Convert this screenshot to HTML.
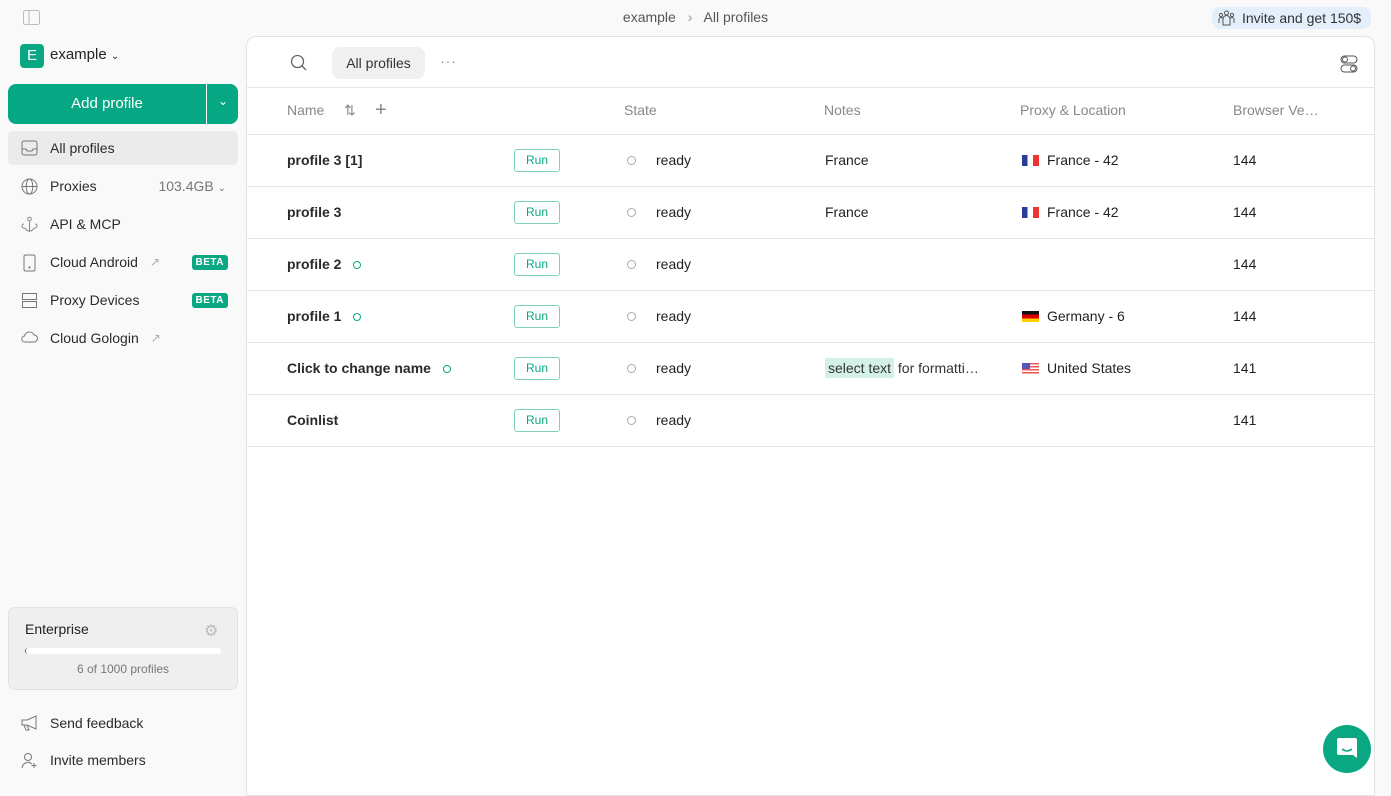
<!DOCTYPE html>
<html><head><meta charset="utf-8"><style>
*{box-sizing:border-box;margin:0;padding:0}
body{width:1391px;height:793px;background:#f9f9f9;font-family:"Liberation Sans",sans-serif;font-size:14px;color:#222;position:relative;overflow:hidden}
.abs{position:absolute}
.nav{position:absolute;left:8px;width:230px;height:34px;display:flex;align-items:center;padding-left:42px;font-size:14px;color:#2b2b2b}
.nav svg{position:absolute;left:13px;top:9px}
.beta{position:absolute;right:10px;top:10px;background:#0aa882;color:#fff;font-size:10px;font-weight:bold;padding:2px 4px;border-radius:3px;letter-spacing:.5px}
.ext{color:#aaa;font-size:12px;margin-left:12px}
.main{position:absolute;left:246px;top:36px;width:1129px;height:760px;background:#fff;border:1px solid #e3e3e3;border-radius:10px 10px 0 0}
.row{position:absolute;left:0;width:1128px;height:52px;border-bottom:1px solid #e6e6e6}
.row>*{position:absolute;top:0;line-height:50px}
.nm{left:40px;font-weight:bold;color:#2a2a2a}
.run{left:267px;top:14px!important;width:46px;height:23px;line-height:21px!important;border:1px solid #7fd0bd;border-radius:3px;color:#0aa882;font-size:12px;text-align:center}
.st{left:380px;top:21px!important;width:9px;height:9px;border:1px solid #aaa;border-radius:50%}
.rd{left:409px}
.nt{left:578px}
.px{left:800px}
.bv{left:986px}
.flag{display:inline-block;width:17px;height:11px;vertical-align:-1px;margin-right:8px;position:relative;left:-25px;margin-right:-17px}
.gd{display:inline-block;width:8px;height:8px;border:1.5px solid #0aa882;border-radius:50%;margin-left:12px;vertical-align:0}
.hd{position:absolute;top:0;line-height:45px;color:#888}
</style></head><body>
<svg class="abs" style="left:23px;top:10px" width="17" height="15" viewBox="0 0 17 15"><rect x=".5" y=".5" width="16" height="14" rx="2" fill="none" stroke="#bbb"/><line x1="6" y1="1" x2="6" y2="14" stroke="#bbb"/></svg>
<div class="abs" style="left:0;width:1391px;top:9px;text-align:center;color:#555;font-size:14px">example <span style="color:#999;margin:0 8px">›</span> All profiles</div>
<div class="abs" style="left:1212px;top:7px;width:159px;height:22px;background:#e3effb;border-radius:8px;font-size:14px;line-height:22px;padding-left:30px;color:#333">Invite and get 150$</div>
<svg class="abs" style="left:1218px;top:10px" width="17" height="16" viewBox="0 0 17 16" fill="none" stroke="#555"><circle cx="8.5" cy="3" r="2"/><circle cx="3" cy="5" r="1.6"/><circle cx="14" cy="5" r="1.6"/><path d="M5 15V9a3.5 3.5 0 017 0v6zM1 13V9.5a2 2 0 014 0M16 13V9.5a2 2 0 00-4 0"/></svg>

<div class="abs" style="left:20px;top:44px;width:24px;height:24px;background:#0aa882;border-radius:4px;color:#fff;text-align:center;line-height:24px;font-size:15px">E</div>
<div class="abs" style="left:50px;top:46px;font-size:15px;color:#222">example <span style="font-size:10px">⌄</span></div>
<div class="abs" style="left:8px;top:84px;width:230px;height:40px;background:#05a882;border-radius:8px"></div>
<div class="abs" style="left:8px;top:84px;width:198px;height:40px;line-height:40px;text-align:center;color:#fff;font-size:15px">Add profile</div>
<div class="abs" style="left:206px;top:84px;width:1px;height:40px;background:#fff"></div>
<div class="abs" style="left:218px;top:94px;color:#fff;font-size:12px">⌄</div>

<div class="nav" style="top:131px;background:#ebebeb;border-radius:5px"><svg width="17" height="16" viewBox="0 0 17 16" fill="none" stroke="#777"><rect x="1" y="1" width="15" height="14" rx="2"/><path d="M1 9h4l1 2h5l1-2h4"/></svg>All profiles</div>
<div class="nav" style="top:169px"><svg width="17" height="17" viewBox="0 0 17 17" fill="none" stroke="#777"><circle cx="8.5" cy="8.5" r="7.5"/><ellipse cx="8.5" cy="8.5" rx="3.3" ry="7.5"/><path d="M1 8.5h15"/></svg>Proxies<span style="position:absolute;right:12px;color:#777">103.4GB <span style="font-size:10px">⌄</span></span></div>
<div class="nav" style="top:207px"><svg width="17" height="17" viewBox="0 0 17 17" fill="none" stroke="#888"><circle cx="8.5" cy="3" r="1.8"/><path d="M8.5 5v11M3 8a2 2 0 100 4c2 0 2 3 5 3M14 8a2 2 0 110 4c-2 0-2 3-5 3"/></svg>API &amp; MCP</div>
<div class="nav" style="top:245px"><svg width="17" height="18" viewBox="0 0 17 18" fill="none" stroke="#777"><rect x="3" y="1" width="11" height="16" rx="1.5"/><circle cx="8.5" cy="13.5" r=".6" fill="#666"/></svg>Cloud Android<span class="ext">↗</span><span class="beta">BETA</span></div>
<div class="nav" style="top:283px"><svg width="17" height="17" viewBox="0 0 17 17" fill="none" stroke="#777"><rect x="1.5" y="1.5" width="14" height="6"/><rect x="1.5" y="9.5" width="14" height="6"/></svg>Proxy Devices<span class="beta">BETA</span></div>
<div class="nav" style="top:321px"><svg width="17" height="14" viewBox="0 0 17 14" fill="none" stroke="#777"><path d="M4 12a3 3 0 01-.5-6A5 5 0 0113 5a3.5 3.5 0 010 7z"/></svg>Cloud Gologin<span class="ext">↗</span></div>

<div class="abs" style="left:8px;top:607px;width:230px;height:83px;background:#efefef;border:1px solid #e2e2e2;border-radius:7px"></div>
<div class="abs" style="left:25px;top:621px;color:#222">Enterprise</div>
<div class="abs" style="left:204px;top:621px;color:#bbb;font-size:16px">⚙</div>
<div class="abs" style="left:25px;top:648px;width:196px;height:6px;background:#fff;border-radius:3px;border-left:1px solid #666"></div>
<div class="abs" style="left:8px;width:230px;top:662px;text-align:center;color:#777;font-size:12px">6 of 1000 profiles</div>
<div class="nav" style="top:706px"><svg width="17" height="16" viewBox="0 0 17 16" fill="none" stroke="#777"><path d="M1 5h5l9-4v13l-9-4H1zM3 10l2 5h3l-2-5"/></svg>Send feedback</div>
<div class="nav" style="top:743px"><svg width="17" height="17" viewBox="0 0 17 17" fill="none" stroke="#777"><circle cx="7" cy="5" r="3.5"/><path d="M1 16a6 6 0 0110-4M13 11v5M10.5 13.5h5"/></svg>Invite members</div>

<div class="main">
<svg class="abs" style="left:43px;top:17px" width="18" height="18" viewBox="0 0 18 18" fill="none" stroke="#666" stroke-width="1.3"><circle cx="7.5" cy="7.5" r="6"/><path d="M12 12l4 4"/></svg>
<div class="abs" style="left:85px;top:10px;width:93px;height:32px;background:#f0f0f0;border-radius:8px;line-height:32px;text-align:center;color:#333">All profiles</div>
<div class="abs" style="left:193px;top:16px;color:#888;letter-spacing:1px">···</div>
<svg class="abs" style="left:1093px;top:18px" width="18" height="18" viewBox="0 0 18 18" fill="none" stroke="#555"><rect x="1" y="1" width="16" height="7" rx="3.5"/><rect x="1" y="10" width="16" height="7" rx="3.5"/><circle cx="5" cy="4.5" r="2.5"/><circle cx="13" cy="13.5" r="2.5"/></svg>
<div class="row" style="top:50px;height:48px;border-top:1px solid #e6e6e6">
<div class="hd" style="left:40px">Name</div><div class="hd" style="left:97px">⇅</div><div class="hd" style="left:128px;font-size:20px;font-weight:300">+</div>
<div class="hd" style="left:377px">State</div><div class="hd" style="left:577px">Notes</div><div class="hd" style="left:773px">Proxy &amp; Location</div><div class="hd" style="left:986px">Browser Ve…</div></div>
<div class="row" style="top:98px"><span class="nm">profile 3 [1]</span><span class="run">Run</span><span class="st"></span><span class="rd">ready</span><span class="nt">France</span><span class="px"><span class="flag" style="background:linear-gradient(90deg,#2a3c9a 33%,#fff 33% 66%,#e33 66%)"></span>France - 42</span><span class="bv">144</span></div>
<div class="row" style="top:150px"><span class="nm">profile 3</span><span class="run">Run</span><span class="st"></span><span class="rd">ready</span><span class="nt">France</span><span class="px"><span class="flag" style="background:linear-gradient(90deg,#2a3c9a 33%,#fff 33% 66%,#e33 66%)"></span>France - 42</span><span class="bv">144</span></div>
<div class="row" style="top:202px"><span class="nm">profile 2<span class="gd"></span></span><span class="run">Run</span><span class="st"></span><span class="rd">ready</span><span class="bv">144</span></div>
<div class="row" style="top:254px"><span class="nm">profile 1<span class="gd"></span></span><span class="run">Run</span><span class="st"></span><span class="rd">ready</span><span class="px"><span class="flag" style="background:linear-gradient(#111 33%,#d00 33% 66%,#fc0 66%)"></span>Germany - 6</span><span class="bv">144</span></div>
<div class="row" style="top:306px"><span class="nm">Click to change name<span class="gd"></span></span><span class="run">Run</span><span class="st"></span><span class="rd">ready</span><span class="nt" style="color:#333"><span style="background:#d3f1e8;padding:2px 3px">select text</span> for formatti…</span><span class="px"><span class="flag" style="background:repeating-linear-gradient(#e55 0 1.5px,#fff 1.5px 3px)"><i style="position:absolute;left:0;top:0;width:8px;height:6px;background:#55b"></i></span>United States</span><span class="bv">141</span></div>
<div class="row" style="top:358px"><span class="nm">Coinlist</span><span class="run">Run</span><span class="st"></span><span class="rd">ready</span><span class="bv">141</span></div>
</div>
<div class="abs" style="left:1323px;top:725px;width:48px;height:48px;border-radius:50%;background:#0aa882"></div>
<svg class="abs" style="left:1337px;top:738px" width="20" height="22" viewBox="0 0 20 22"><path d="M2 0h16a2 2 0 012 2v18l-4-3H2a2 2 0 01-2-2V2a2 2 0 012-2z" fill="#fff"/><path d="M5 11q5 4 10 0" stroke="#0aa882" stroke-width="1.5" fill="none"/></svg>
</body></html>
